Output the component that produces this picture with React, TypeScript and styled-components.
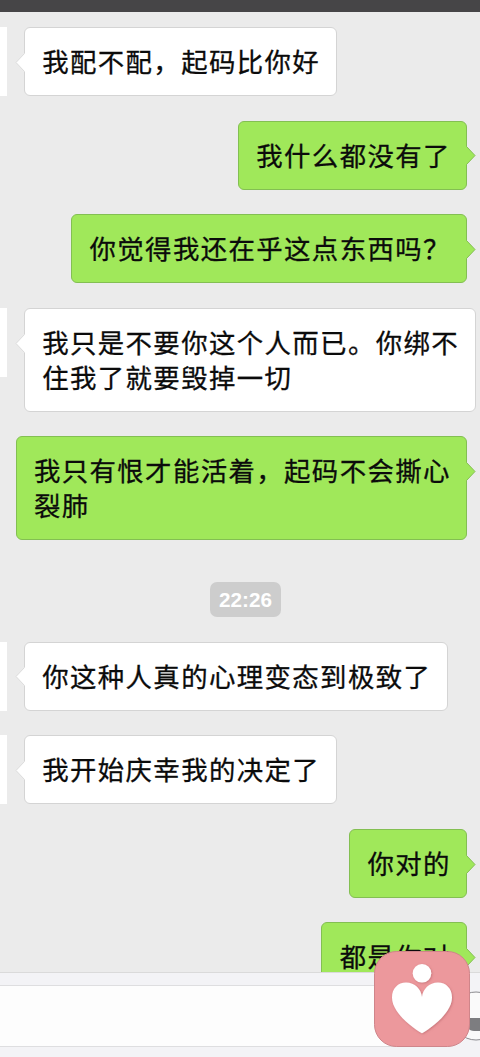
import React from "react";
import styled, { createGlobalStyle, css } from "styled-components";

const Global = createGlobalStyle`
  * { box-sizing: border-box; }
  html, body { margin: 0; padding: 0; background: #ebebeb; }
`;

const Screen = styled.div`
  position: relative;
  display: flex;
  flex-direction: column;
  width: 480px;
  height: 1057px;
  overflow: hidden;
  background: #ebebeb;
  font-family: "Liberation Sans", "Noto Sans CJK SC", sans-serif;
`;

const TopBar = styled.header`
  flex: none;
  height: 12px;
  background: #464547;
`;

const Thread = styled.main`
  flex: none;
  height: 960px;
  padding-top: 15.1px;
  display: flex;
  flex-direction: column;
  gap: 24.4px;
  overflow: hidden;
`;

const Row = styled.div<{ $mine?: boolean }>`
  flex: none;
  display: flex;
  align-items: flex-start;
  justify-content: ${(p) => (p.$mine ? "flex-end" : "flex-start")};
  padding-right: ${(p) => (p.$mine ? "13px" : "0")};
`;

const Avatar = styled.div`
  flex: none;
  width: 7px;
  height: 69px;
  margin-right: 17px;
  background: #fff;
`;

const mineColors = css`
  padding-right: 15.2px;
  background: #a0e85a;
  border-color: #83bf52;
`;

const theirColors = css`
  padding-right: 16px;
  background: #fff;
  border-color: #d4d4d4;
`;

const Bubble = styled.div<{ $mine?: boolean }>`
  position: relative;
  flex: none;
  padding: 16px 0 16.4px 17.2px;
  border: 1px solid;
  border-radius: 6px;
  font-family: "Noto Sans CJK SC", sans-serif;
  font-size: 26.4px;
  letter-spacing: 1.4px;
  line-height: 34.8px;
  white-space: nowrap;
  color: #0b0b0b;
  -webkit-text-stroke: 0.3px currentColor;
  ${(p) => (p.$mine ? mineColors : theirColors)}
`;

const Line = styled.div``;

const Tail = styled.svg<{ $mine?: boolean }>`
  position: absolute;
  top: 23.8px;
  ${(p) => (p.$mine ? "right: -10px;" : "left: -10px; transform: scaleX(-1);")}
  display: block;
`;

const TimeRow = styled.div`
  flex: none;
  display: flex;
  justify-content: center;
  padding-top: 17.8px;
  padding-left: 11px;
`;

const Time = styled.time`
  width: 71px;
  height: 34.8px;
  border-radius: 7px;
  background: #cdcdcd;
  color: #fff;
  font: bold 20.7px/36px "Liberation Sans", sans-serif;
  text-align: center;
`;

const Footer = styled.footer`
  flex: none;
  height: 85px;
  border-top: 1px solid #dadada;
  padding-top: 12px;
  background: #f3f3f6;
  display: flex;
`;

const Input = styled.div`
  flex: none;
  width: 450px;
  height: 62px;
  border: solid #dedee0;
  border-width: 1px 0;
  background: #fdfdfd;
`;

const Emoji = styled.svg`
  flex: none;
  margin: 6px 0 0 12px;
`;

const Floating = styled.svg`
  position: absolute;
  left: 373px;
  top: 950px;
`;

type Message = { mine?: boolean; lines: string[] };

const earlier: Message[] = [
  { lines: ["我配不配，起码比你好"] },
  { mine: true, lines: ["我什么都没有了"] },
  { mine: true, lines: ["你觉得我还在乎这点东西吗？"] },
  { lines: ["我只是不要你这个人而已。你绑不", "住我了就要毁掉一切"] },
  { mine: true, lines: ["我只有恨才能活着，起码不会撕心", "裂肺"] },
];

const later: Message[] = [
  { lines: ["你这种人真的心理变态到极致了"] },
  { lines: ["我开始庆幸我的决定了"] },
  { mine: true, lines: ["你对的"] },
  { mine: true, lines: ["都是你对"] },
];

function Chat({ mine, lines }: Message) {
  return (
    <Row $mine={mine}>
      {!mine && <Avatar />}
      <Bubble $mine={mine}>
        {lines.map((l) => (
          <Line key={l}>{l}</Line>
        ))}
        <Tail $mine={mine} width="10" height="22" viewBox="0 0 10 22">
          <path d="M0 1 L9 10.5 L0 20 Z" fill={mine ? "#a0e85a" : "#fff"} />
          <path d="M.5 1.5 L9 10.5 L.5 19.5" fill="none" stroke={mine ? "#83bf52" : "#dcdcdc"} />
        </Tail>
      </Bubble>
    </Row>
  );
}

export default function App() {
  return (
    <Screen>
      <Global />
      <TopBar />
      <Thread>
        {earlier.map((m) => (
          <Chat key={m.lines[0]} {...m} />
        ))}
        <TimeRow>
          <Time>22:26</Time>
        </TimeRow>
        {later.map((m) => (
          <Chat key={m.lines[0]} {...m} />
        ))}
      </Thread>
      <Footer>
        <Input />
        <Emoji width="48" height="52" viewBox="0 0 48 52">
          <circle cx="14" cy="25" r="24" fill="#fafafa" stroke="#8b8b8f" />
          <path d="M0 27 H30 V40 H12 Q8 40 6 37 L0 37Z" fill="#7d7d80" />
        </Emoji>
      </Footer>
      <Floating width="98" height="98" viewBox="0 0 98 98">
        <defs>
          <filter id="soft" x="-20%" y="-20%" width="140%" height="140%">
            <feDropShadow dx="0.8" dy="0.8" stdDeviation="0.9" floodColor="#a8555c" floodOpacity="0.55" />
          </filter>
        </defs>
        <rect x="1.5" y="1.5" width="95" height="95" rx="22" fill="#ec989c" stroke="#cf858a" />
        <g fill="#fff" filter="url(#soft)">
          <circle cx="49" cy="23.3" r="9.3" />
          <path d="M49 83.3 C40 78 19 63 19 47.5 C19 38.5 25 32.5 33 32.5 C42 32.5 48 39 49 47 C50 39 56 32.5 65 32.5 C73 32.5 79 38.5 79 47.5 C79 63 58 78 49 83.3Z" />
        </g>
      </Floating>
    </Screen>
  );
}
